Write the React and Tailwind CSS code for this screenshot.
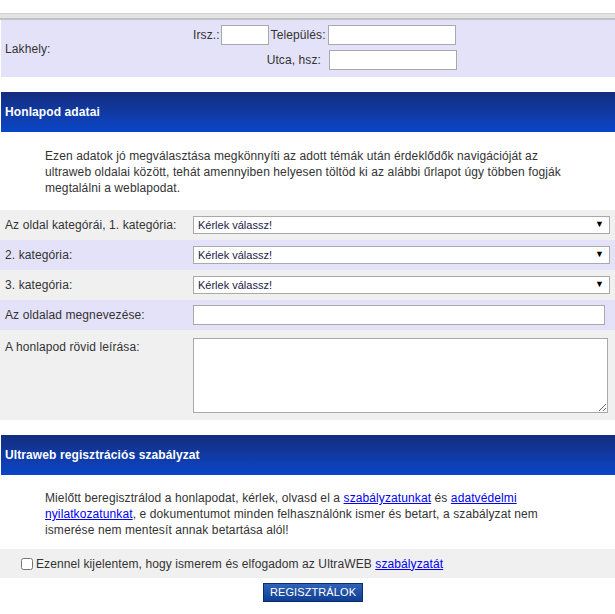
export default function App() {
    const rows = [
        { label: "Az oldal kategórái, 1. kategória:", bg: "bg-[#f0f0f0]" },
        { label: "2. kategória:", bg: "bg-[#e4e2f8]" },
        { label: "3. kategória:", bg: "bg-[#f0f0f0]" },
    ];
    return (
        <div className="w-[615px] h-[614px] overflow-hidden bg-white font-['Liberation_Sans',Arial,sans-serif] text-[12px] tracking-[0.1px] text-[#333]">
            {/* top rule */}
            <div className="h-[13px]" />
            <div className="h-[7px] border-t border-[#d2d2d2] bg-[#e2e2e2] border-b-2 border-b-[#c2c2c2]" />

            {/* Lakhely */}
            <div className="ml-[1px] h-[57px] bg-[#e4e2f8] flex items-center">
                <div className="w-[192px] pl-[4px]">Lakhely:</div>
                <div className="flex flex-col gap-[5px] mt-[-2px]">
                    <div className="flex items-center">
                        <span>Irsz.:</span>
                        <input className="ml-[1px] w-[48px] h-[20px] bg-white border border-[#a9a9a9] outline-none" />
                        <span className="ml-[2px]">Település:</span>
                        <input className="ml-[2px] w-[128px] h-[20px] bg-white border border-[#a9a9a9] outline-none" />
                    </div>
                    <div className="flex items-center">
                        <span className="w-[136px] text-right pr-[8px]">Utca, hsz:</span>
                        <input className="w-[128px] h-[20px] bg-white border border-[#a9a9a9] outline-none" />
                    </div>
                </div>
            </div>

            {/* Honlapod adatai */}
            <div className="mt-[15px] ml-[1px] h-[40px] bg-gradient-to-b from-[#132d7e] to-[#0846c9] flex items-center pl-[4px] text-white font-bold">
                Honlapod adatai
            </div>
            <div className="h-[78px] pt-[16px] pl-[45px] leading-[16px]">
                Ezen adatok jó megválasztása megkönnyíti az adott témák után érdeklődők navigációját az<br />
                ultraweb oldalai között, tehát amennyiben helyesen töltöd ki az alábbi űrlapot úgy többen fogják<br />
                megtalálni a weblapodat.
            </div>

            {rows.map((r) => (
                <div key={r.label} className={`h-[30px] flex items-center ${r.bg}`}>
                    <div className="w-[193px] pl-[5px]">{r.label}</div>
                    <div className="relative w-[417px] h-[18px]">
                        <select className="appearance-none w-full h-full bg-white border border-[#a9a9a9] pl-[4px] text-[11px] tracking-normal text-[#221a44] outline-none rounded-none">
                            <option>Kérlek válassz!</option>
                        </select>
                        <span className="absolute right-[6px] top-[2px] text-[9px] text-black pointer-events-none">▼</span>
                    </div>
                </div>
            ))}

            <div className="h-[30px] flex items-center bg-[#e4e2f8]">
                <div className="w-[193px] pl-[5px]">Az oldalad megnevezése:</div>
                <input className="w-[412px] h-[20px] bg-white border border-[#a9a9a9] outline-none" />
            </div>

            <div className="h-[90px] flex items-start bg-[#f0f0f0]">
                <div className="w-[193px] pl-[5px] pt-[8px]">A honlapod rövid leírása:</div>
                <textarea className="mt-[8px] w-[415px] h-[75px] bg-white border border-[#a9a9a9] outline-none" />
            </div>

            {/* Szabályzat */}
            <div className="mt-[15px] ml-[1px] h-[40px] bg-gradient-to-b from-[#132d7e] to-[#0846c9] flex items-center pl-[4px] text-white font-bold">
                Ultraweb regisztrációs szabályzat
            </div>
            <div className="h-[74px] pt-[15px] pl-[45px] leading-[16px]">
                Mielőtt beregisztrálod a honlapodat, kérlek, olvasd el a <a href="#" className="text-[#0000ee] underline">szabályzatunkat</a> és <a href="#" className="text-[#0000ee] underline">adatvédelmi</a><br />
                <a href="#" className="text-[#0000ee] underline">nyilatkozatunkat</a>, e dokumentumot minden felhasználónk ismer és betart, a szabályzat nem<br />
                ismerése nem mentesít annak betartása alól!
            </div>

            <div className="h-[29px] bg-[#f0f0f0] flex items-center pl-[21px]">
                <input type="checkbox" className="w-[12px] h-[12px] m-0 mr-[3px]" />
                <span>Ezennel kijelentem, hogy ismerem és elfogadom az UltraWEB <a href="#" className="text-[#0000ee] underline">szabályzatát</a></span>
            </div>

            <div className="flex pt-[5px] pl-[263px]">
                <button className="w-[100px] h-[19px] bg-gradient-to-b from-[#2f62b8] to-[#0f3f94] border border-[#0b2d6e] text-white text-[11px] leading-none">
                    REGISZTRÁLOK
                </button>
            </div>
        </div>
    );
}
